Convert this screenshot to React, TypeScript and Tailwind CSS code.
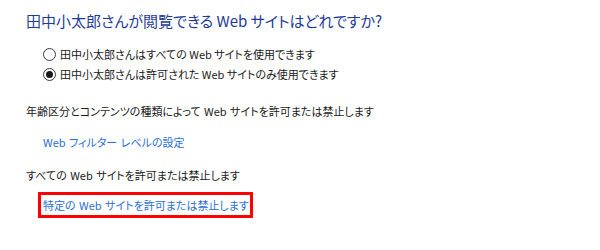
import React from 'react';

const font = "font-['Noto_Sans_CJK_JP','Noto_Sans',sans-serif] [font-feature-settings:'palt']";

const options = [
  { label: '田中小太郎さんはすべての Web サイトを使用できます', checked: false },
  { label: '田中小太郎さんは許可された Web サイトのみ使用できます', checked: true },
];

const Radio = ({ checked }: { checked: boolean }) => (
  <span className="mr-[4px] flex h-[13px] w-[13px] items-center justify-center rounded-full border border-[#3c3c3c] bg-white">
    {checked && <span className="h-[7px] w-[7px] rounded-full bg-[#1a1a1a]" />}
  </span>
);

const App = () => {
  return (
    <div className={`h-[250px] w-[600px] bg-white pl-[26px] pt-[9px] text-[11px] text-[#1a1a1a] ${font}`}>
      <h1 className="h-[24px] text-[15px] leading-[24px] text-[#1e3c96]">
        田中小太郎さんが閲覧できる Web サイトはどれですか?
      </h1>

      <div className="mt-[11px] pl-[17px]">
        {options.map((o) => (
          <label key={o.label} className="flex h-[20px] items-center">
            <Radio checked={o.checked} />
            <span>{o.label}</span>
          </label>
        ))}
      </div>

      <p className="mt-[17px] h-[20px] leading-[20px] [word-spacing:1px]">年齢区分とコンテンツの種類によって Web サイトを許可または禁止します</p>
      <p className="mt-[11px] h-[20px] pl-[17px] leading-[20px] text-[#2a6fd6] [word-spacing:1px]">Web フィルター レベルの設定</p>

      <p className="mt-[13px] h-[20px] leading-[20px] [word-spacing:1px]">すべての Web サイトを許可または禁止します</p>
      <div className="ml-[12px] mt-[7px] w-[215px] border-[3px] border-[#ff0000] pl-[2px]">
        <span className="block h-[20px] leading-[20px] text-[#2a6fd6] [word-spacing:1px]">特定の Web サイトを許可または禁止します</span>
      </div>
    </div>
  );
};

export default App;
